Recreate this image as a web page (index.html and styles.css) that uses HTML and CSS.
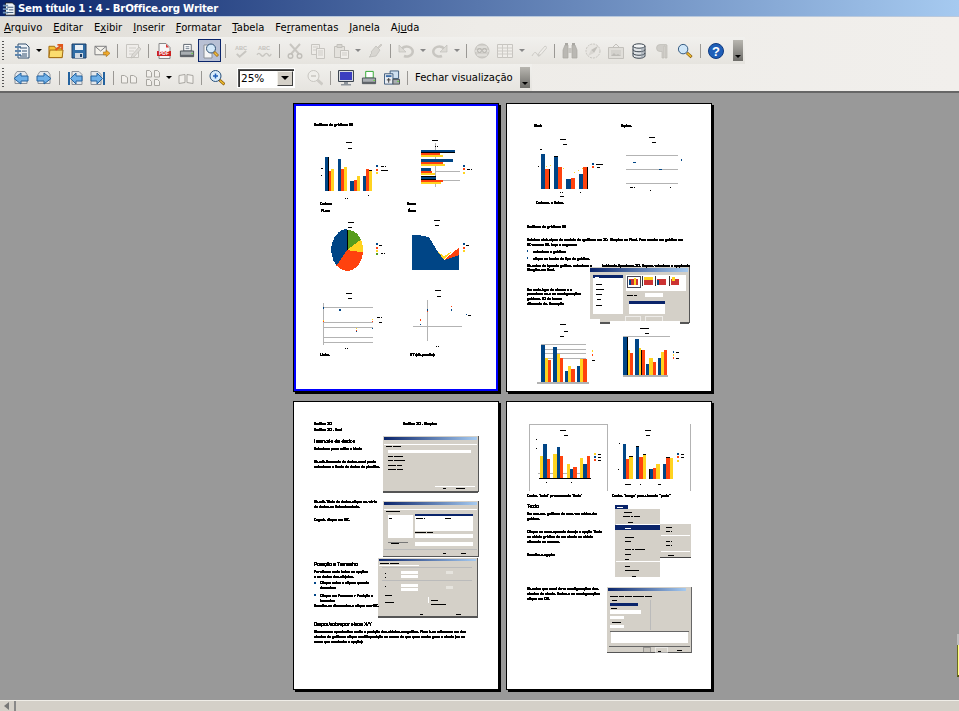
FILE: index.html
```html
<!DOCTYPE html>
<html lang="pt-BR">
<head>
<meta charset="utf-8">
<title>Sem título 1 : 4 - BrOffice.org Writer</title>
<link rel="stylesheet" href="styles.css">
</head>
<body>
<svg class="defs" aria-hidden="true">
<defs>
<linearGradient id="tbar" x1="0" x2="1" y1="0" y2="0"><stop offset="0" stop-color="#0a246a"/><stop offset="1" stop-color="#a6caf0"/></linearGradient>
<symbol id="i-new" viewBox="0 0 16 16"><path d="M4 1h8l3 3v11H4z" fill="#eef3f8" stroke="#34506e"/><path d="M1 3h6v2H1zM1 7h6v2H1zM1 11h6v2H1z" fill="#5f86ad"/><path d="M6 5h7M8 8h5M8 11h5M6 13h7" stroke="#34506e"/></symbol>
<symbol id="i-open" viewBox="0 0 17 16"><path d="M1 3h6l1 2h7v10H1z" fill="#f5c33a" stroke="#a06a10"/><path d="M2 7h14l-1 8H1z" fill="#fbdc6e" stroke="#a06a10"/><path d="M8 7l6-5M10 1.500h5v5" fill="none" stroke="#e0561a" stroke-width="2"/></symbol>
<symbol id="i-save" viewBox="0 0 16 16"><path d="M1 1h14v14H1z" fill="#2f6ca5" stroke="#1d3f68"/><path d="M4 2h8v5H4z" fill="#e8eef4"/><path d="M4 10h8v5H4z" fill="#cfd8e2"/><path d="M9 11h2v3H9z" fill="#1d3f68"/></symbol>
<symbol id="i-mail" viewBox="0 0 17 16"><path d="M1 3h12v9H1z" fill="#f4f2ec" stroke="#77777a"/><path d="M1 3l6 5 6-5" fill="none" stroke="#77777a"/><path d="M10 9h3V7l4 3.500-4 3.500v-2h-3z" fill="#f0a828" stroke="#9d6a14" stroke-width=".6"/></symbol>
<symbol id="i-edit" viewBox="0 0 16 16"><path d="M1.500 1.500h12v13h-12z" fill="#efedea" stroke="#c7c5c0"/><path d="M4 5h7M4 8h5M4 11h4" stroke="#cfcdc8"/><path d="M7 12l7-8 2 2-7 8-3 1z" fill="#dcdad6" stroke="#bdbbb6" stroke-width=".7"/></symbol>
<symbol id="i-pdf" viewBox="0 0 16 16"><path d="M3 .500h7l4 4v11H3z" fill="#f6f6f6" stroke="#888"/><path d="M10 1l3 3.500h-3z" fill="#d33"/><path d="M1 8h14v5H1z" fill="#c22"/><text x="8" y="12.400" class="pdf">PDF</text></symbol>
<symbol id="i-print" viewBox="0 0 17 16"><path d="M5 1h8v7H5z" fill="#fff" stroke="#57606a"/><path d="M7 3.500h4M7 5.500h4" stroke="#6d7b8a"/><path d="M1.500 8h14v6h-14z" fill="#a9aeb2" stroke="#4c5257"/><path d="M2 12h13v2H2z" fill="#5f6469"/><path d="M13 10h2v1h-2z" fill="#5fd03a"/></symbol>
<symbol id="i-prev" viewBox="0 0 18 18"><path d="M3 3h8v13H3z" fill="#f5f5f5" stroke="#8a8f96"/><circle cx="10" cy="6.500" r="4.500" fill="#d3e8f8" stroke="#2f4f72"/><path d="M13 10l4 4" stroke="#a06a10" stroke-width="3"/><path d="M13.500 10.500l3 3" stroke="#f0c040" stroke-width="1.500"/></symbol>
<symbol id="i-abc" viewBox="0 0 17 16"><text x="8.500" y="7" class="abc">ABC</text><path d="M4 11l3 3 7-6" fill="none" stroke="#c8c6c1" stroke-width="2"/></symbol>
<symbol id="i-abcw" viewBox="0 0 17 16"><text x="8.500" y="7" class="abc">ABC</text><path d="M1 12q2-3 4 0t4 0 4 0 3-1" fill="none" stroke="#c8c6c1" stroke-width="1.500"/></symbol>
<symbol id="i-cut" viewBox="0 0 16 16"><path d="M3 1l9 10M13 1L4 11" stroke="#c8c6c1" stroke-width="2"/><circle cx="3.500" cy="13" r="2.300" fill="none" stroke="#c0beb9" stroke-width="1.400"/><circle cx="12.500" cy="13" r="2.300" fill="none" stroke="#c0beb9" stroke-width="1.400"/></symbol>
<symbol id="i-copy" viewBox="0 0 16 16"><path d="M1.500 1.500h8v10h-8z" fill="#eeece8" stroke="#c7c5c0"/><path d="M6.500 5.500h8v10h-8z" fill="#eeece8" stroke="#c7c5c0"/><path d="M3 4h5M3 7h3M8 8h5M8 10h5M8 12h5" stroke="#cfcdc8"/></symbol>
<symbol id="i-paste" viewBox="0 0 16 16"><path d="M1.500 3.500h10v11h-10z" fill="#e4e2dd" stroke="#c2c0bb"/><path d="M4 1.500h5v3H4z" fill="#d8d6d1" stroke="#c2c0bb"/><path d="M7.500 7.500h8v8h-8z" fill="#f0eeea" stroke="#c2c0bb"/><path d="M9 10h5M9 12h5" stroke="#cfcdc8"/></symbol>
<symbol id="i-brush" viewBox="0 0 16 16"><path d="M10 5l4-4 1 1-4 4z" fill="#cfcdc8" stroke="#c2c0bb" stroke-width=".6"/><path d="M9 3l4 4-4 6-7 1 2-1-1-1 2-2-1-1z" fill="#d8d6d1" stroke="#c2c0bb" stroke-width=".8"/></symbol>
<symbol id="i-undo" viewBox="0 0 16 16"><path d="M3 7a6 5 0 1 1 3 6" fill="none" stroke="#c8c6c1" stroke-width="2.500"/><path d="M1 2v7h7z" fill="#dcdad5" stroke="#c2c0bb" stroke-width=".7"/></symbol>
<symbol id="i-redo" viewBox="0 0 16 16"><path d="M13 7a6 5 0 1 0-3 6" fill="none" stroke="#c8c6c1" stroke-width="2.500"/><path d="M15 2v7H8z" fill="#dcdad5" stroke="#c2c0bb" stroke-width=".7"/></symbol>
<symbol id="i-globe" viewBox="0 0 16 16"><circle cx="8" cy="8" r="7" fill="#d2d0cb" stroke="#c4c2bd"/><path d="M1 8h14M3 4h10M3 12h10" stroke="#ecebe7"/><circle cx="5.500" cy="7.500" r="2" fill="none" stroke="#b5b3ae"/><circle cx="10.500" cy="7.500" r="2" fill="none" stroke="#b5b3ae"/></symbol>
<symbol id="i-table" viewBox="0 0 16 16"><path d="M.500 1.500h15v13H.500z" fill="#f0eeea" stroke="#c7c5c0"/><path d="M.5 5h15M.5 8h15M.5 11h15M5.500 1.500v13M10.500 1.500v13" stroke="#cdcbc6"/></symbol>
<symbol id="i-draw" viewBox="0 0 16 16"><path d="M1 13q3-6 5-2t3 1" fill="none" stroke="#cdcbc6"/><path d="M8 10l6-7 2 1.500-6 7-3 1z" fill="#eeece8" stroke="#c7c5c0" stroke-width=".8"/></symbol>
<symbol id="i-bin" viewBox="0 0 16 16"><path d="M1 7l2-5h3v13H1zM15 7l-2-5h-3v13h5z" fill="#bab8b3" stroke="#a9a7a2" stroke-width=".7"/><path d="M6 5h4v5H6z" fill="#c8c6c1"/><path d="M3 0h3v2H3zM10 0h3v2h-3z" fill="#a9a7a2"/></symbol>
<symbol id="i-nav" viewBox="0 0 16 16"><circle cx="8" cy="8" r="7" fill="#e8e6e2" stroke="#c8c6c1" stroke-dasharray="2 1"/><path d="M13 3L9 10 6 7z" fill="#c2c0bb"/><path d="M3 13l3-6 3 3z" fill="#d8d6d1"/></symbol>
<symbol id="i-gal" viewBox="0 0 16 16"><path d="M.5 4.500h15v11H.5z" fill="#e0ded9" stroke="#c2c0bb"/><path d="M3 7h10v6H3z" fill="#d4d2cd"/><path d="M5 4l3-3 3 3" fill="none" stroke="#c2c0bb"/><path d="M3 13l3-3 2 2 2-1 3 2z" fill="#bdbbb6"/></symbol>
<symbol id="i-db" viewBox="0 0 14 16"><path d="M1 3v10c0 3 12 3 12 0V3z" fill="#dfe3e6" stroke="#3d4650"/><ellipse cx="7" cy="3" rx="6" ry="2.200" fill="#f3f5f6" stroke="#3d4650"/><path d="M1 6.500c0 3 12 3 12 0M1 10c0 3 12 3 12 0" fill="none" stroke="#3d4650"/><path d="M9 4v11h3V4z" fill="#8a949e" opacity=".5"/></symbol>
<symbol id="i-para" viewBox="0 0 14 16"><path d="M11 1.500H5a3.500 3.500 0 0 0 0 7h2v6.500h2V3h1v12h2V2z" fill="#cfcdc8" stroke="#bdbbb6" stroke-width=".7"/></symbol>
<symbol id="i-find" viewBox="0 0 17 16"><circle cx="6.500" cy="6" r="5" fill="#cfe6f8" stroke="#28507a"/><path d="M10.500 10l5 4.500" stroke="#8a5c10" stroke-width="3"/><path d="M11 10.500l4 3.500" stroke="#f2c22e" stroke-width="1.500"/></symbol>
<symbol id="i-help" viewBox="0 0 16 16"><circle cx="8" cy="8" r="7.500" fill="#1f5fb8" stroke="#0f3a80"/><text x="8" y="12.800" class="helpq">?</text></symbol>
<symbol id="i-back" viewBox="0 0 16 16"><path d="M4 1.500h8l2 3v9H2v-9z" fill="#e4e8ec" stroke="#8b9199"/><path d="M8 3v3h7v5H8v3L1 8.500z" fill="#6fb0e8" stroke="#24639f"/></symbol>
<symbol id="i-fwd" viewBox="0 0 16 16"><path d="M4 1.500h8l2 3v9H2v-9z" fill="#e4e8ec" stroke="#8b9199"/><path d="M8 3v3H1v5h7v3l7-5.500z" fill="#6fb0e8" stroke="#24639f"/></symbol>
<symbol id="i-first" viewBox="0 0 16 16"><path d="M5 1.500h7l3 3v10H5z" fill="#e4e8ec" stroke="#8b9199"/><path d="M1 2h2v13H1z" fill="#24639f"/><path d="M9 3v3h6v5H9v3L3.500 8.500z" fill="#6fb0e8" stroke="#24639f"/></symbol>
<symbol id="i-last" viewBox="0 0 16 16"><path d="M1 1.500h7l3 3v10H1z" fill="#e4e8ec" stroke="#8b9199"/><path d="M13 2h2v13h-2z" fill="#24639f"/><path d="M7 3v3H1v5h6v3l5.500-5.500z" fill="#6fb0e8" stroke="#24639f"/></symbol>
<symbol id="i-two" viewBox="0 0 16 16"><path d="M.5 5.500h3l3 2v5.500h-6zM9.500 5.500h3l3 2v5.500h-6z" fill="#f2f0ec" stroke="#a8a6a1"/></symbol>
<symbol id="i-four" viewBox="0 0 16 16"><path d="M2.500 .5h3l2 2v4.500h-5zM10.500 .5h3l2 2v4.500h-5zM2.500 9.500h3l2 2v4h-5zM10.500 9.500h3l2 2v4h-5z" fill="#f2f0ec" stroke="#a8a6a1"/></symbol>
<symbol id="i-book" viewBox="0 0 16 16"><path d="M1 5.500l6-1v8l-6 1zM15 5.500l-6-1v8l6 1z" fill="#f2f0ec" stroke="#a8a6a1"/></symbol>
<symbol id="i-zin" viewBox="0 0 16 16"><circle cx="6.500" cy="6" r="5.500" fill="#d9ecfa" stroke="#28507a"/><path d="M4 6h5M6.500 3.500v5" stroke="#1f5fb8" stroke-width="1.500"/><path d="M10.500 10l5 4.500" stroke="#8a5c10" stroke-width="3"/><path d="M11 10.500l4 3.500" stroke="#f2c22e" stroke-width="1.500"/></symbol>
<symbol id="i-zout" viewBox="0 0 16 16"><circle cx="6.500" cy="6" r="5.500" fill="#efeeea" stroke="#c8c6c1"/><path d="M4 6h5" stroke="#c8c6c1" stroke-width="1.500"/><path d="M10.500 10l5 4.500" stroke="#cdcbc6" stroke-width="3"/></symbol>
<symbol id="i-mon" viewBox="0 0 16 16"><path d="M.5 .5h15v11H.5z" fill="#d8dbe0" stroke="#3d4650"/><path d="M2 2h12v8H2z" fill="#3c3fc0"/><path d="M6 12h4v2H6zM3 14h10v1.500H3z" fill="#8d949b"/></symbol>
<symbol id="i-pr2" viewBox="0 0 17 16"><path d="M5 1h8v7H5z" fill="#fff" stroke="#2da62d"/><path d="M1.500 8h14v6h-14z" fill="#a9aeb2" stroke="#4c5257"/><path d="M2 12h13v2H2z" fill="#5f6469"/><path d="M13 10h2v1h-2z" fill="#5fd03a"/></symbol>
<symbol id="i-pr3" viewBox="0 0 17 16"><path d="M6.500 .5h9v8h-9z" fill="#cfe0f0" stroke="#3d5a7a"/><path d="M.5 3.500h9v11h-9z" fill="#e9edf2" stroke="#3d5a7a"/><path d="M2 5h6v2H2z" fill="#3d6ea8"/><path d="M5 8v5M3 10h4" stroke="#333"/><path d="M9.500 9.500h7v5h-7z" fill="#a9aeb2" stroke="#4c5257"/><path d="M14 11h2v1h-2z" fill="#5fd03a"/></symbol>
</defs>
</svg>

<header class="titlebar">
<svg class="ticon" viewBox="0 0 16 16"><path d="M4 1h8l3 3v11H4z" fill="#eef3f8" stroke="#222"/><path d="M1 3h6v2H1zM1 7h6v2H1zM1 11h6v2H1z" fill="#6f93b8"/><path d="M6 6h7M8 9h5M6 12h7" stroke="#34506e"/></svg>
<span>Sem título 1 : 4 - BrOffice.org Writer</span>
</header>

<div class="chrome">
<nav class="menubar">
<span><u>A</u>rquivo</span><span><u>E</u>ditar</span><span>E<u>x</u>ibir</span><span><u>I</u>nserir</span><span><u>F</u>ormatar</span><span><u>T</u>abela</span><span>Fe<u>r</u>ramentas</span><span><u>J</u>anela</span><span>Aj<u>u</u>da</span>
</nav>

<div class="toolbar tb-main">
<i class="grip"></i>
<b class="btn"><svg class="ic"><use href="#i-new"/></svg></b><b class="arr"></b>
<b class="btn"><svg class="ic"><use href="#i-open"/></svg></b>
<b class="btn"><svg class="ic"><use href="#i-save"/></svg></b>
<b class="btn"><svg class="ic"><use href="#i-mail"/></svg></b>
<i class="sep"></i>
<b class="btn"><svg class="ic"><use href="#i-edit"/></svg></b>
<i class="sep"></i>
<b class="btn"><svg class="ic"><use href="#i-pdf"/></svg></b>
<b class="btn"><svg class="ic"><use href="#i-print"/></svg></b>
<b class="btn on"><svg class="ic big"><use href="#i-prev"/></svg></b>
<i class="sep"></i>
<b class="btn"><svg class="ic"><use href="#i-abc"/></svg></b>
<b class="btn"><svg class="ic"><use href="#i-abcw"/></svg></b>
<i class="sep"></i>
<b class="btn"><svg class="ic"><use href="#i-cut"/></svg></b>
<b class="btn"><svg class="ic"><use href="#i-copy"/></svg></b>
<b class="btn"><svg class="ic"><use href="#i-paste"/></svg></b><b class="arr off"></b>
<b class="btn"><svg class="ic"><use href="#i-brush"/></svg></b>
<i class="sep"></i>
<b class="btn"><svg class="ic"><use href="#i-undo"/></svg></b><b class="arr off"></b>
<b class="btn"><svg class="ic"><use href="#i-redo"/></svg></b><b class="arr off"></b>
<i class="sep"></i>
<b class="btn"><svg class="ic"><use href="#i-globe"/></svg></b>
<b class="btn"><svg class="ic"><use href="#i-table"/></svg></b><b class="arr off"></b>
<b class="btn"><svg class="ic"><use href="#i-draw"/></svg></b>
<i class="sep"></i>
<b class="btn"><svg class="ic"><use href="#i-bin"/></svg></b>
<b class="btn"><svg class="ic"><use href="#i-nav"/></svg></b>
<b class="btn"><svg class="ic"><use href="#i-gal"/></svg></b>
<b class="btn"><svg class="ic"><use href="#i-db"/></svg></b>
<b class="btn"><svg class="ic"><use href="#i-para"/></svg></b>
<b class="btn"><svg class="ic"><use href="#i-find"/></svg></b>
<i class="sep"></i>
<b class="btn"><svg class="ic"><use href="#i-help"/></svg></b>
<b class="more"></b>
</div>

<div class="toolbar tb-preview">
<i class="grip"></i>
<b class="btn"><svg class="ic"><use href="#i-back"/></svg></b>
<b class="btn"><svg class="ic"><use href="#i-fwd"/></svg></b>
<i class="sep"></i>
<b class="btn"><svg class="ic"><use href="#i-first"/></svg></b>
<b class="btn"><svg class="ic"><use href="#i-last"/></svg></b>
<i class="sep"></i>
<b class="btn"><svg class="ic"><use href="#i-two"/></svg></b>
<b class="btn"><svg class="ic"><use href="#i-four"/></svg></b><b class="arr"></b>
<b class="btn"><svg class="ic"><use href="#i-book"/></svg></b>
<i class="sep"></i>
<b class="btn"><svg class="ic"><use href="#i-zin"/></svg></b>
<div class="combo"><span>25%</span><b class="combo-btn"></b></div>
<b class="btn"><svg class="ic"><use href="#i-zout"/></svg></b>
<i class="sep"></i>
<b class="btn"><svg class="ic"><use href="#i-mon"/></svg></b>
<b class="btn"><svg class="ic"><use href="#i-pr2"/></svg></b>
<b class="btn"><svg class="ic"><use href="#i-pr3"/></svg></b>
<i class="sep"></i>
<span class="close-label">Fechar visualização</span>
<b class="more"></b>
</div>
</div>

<main class="canvas">

<section class="page current">
<svg viewBox="294 104 204 287" class="sheet">
<defs><filter id="ink" filterUnits="userSpaceOnUse" x="0" y="0" width="959" height="711" color-interpolation-filters="sRGB"><feComponentTransfer><feFuncA type="discrete" tableValues="0 1 1 1 1 1"/></feComponentTransfer></filter></defs>
<g class="o"><rect x="325" y="157" width="3" height="34"/><rect x="328" y="171" width="3" height="20" class="r"/><rect x="331" y="169" width="3" height="22" class="y"/><rect x="338" y="159" width="3" height="32"/><rect x="341" y="169" width="3" height="22" class="r"/><rect x="344" y="167" width="3" height="24" class="y"/><rect x="350" y="181" width="4" height="10"/><rect x="354" y="180" width="3" height="11" class="r"/><rect x="357" y="176" width="3" height="15" class="y"/><rect x="363" y="176" width="3" height="15"/><rect x="366" y="169" width="3" height="22" class="r"/><rect x="369" y="171" width="3" height="20" class="y"/>
<rect x="376" y="165" width="2" height="2"/><rect x="376" y="169" width="2" height="2" class="r"/><rect x="376" y="172" width="2" height="2" class="y"/></g>
<path d="M328.500 157v34M369 170.500h3" class="ln"/>
<g class="grid"><rect x="435" y="143" width="1" height="44"/><rect x="435" y="171" width="25" height="1"/><rect x="443" y="180" width="17" height="1"/></g>
<g class="o"><rect x="421" y="150" width="34" height="3"/><rect x="421" y="153" width="19" height="2" class="r"/><rect x="421" y="155" width="22" height="2" class="y"/><rect x="421" y="159" width="32" height="3"/><rect x="421" y="162" width="22" height="2" class="r"/><rect x="421" y="164" width="24" height="2" class="y"/><rect x="421" y="168" width="10" height="3"/><rect x="421" y="171" width="11" height="2" class="r"/><rect x="421" y="173" width="14" height="2" class="y"/><rect x="421" y="177" width="15" height="3"/><rect x="421" y="180" width="22" height="2" class="r"/><rect x="421" y="182" width="20" height="2" class="y"/>
<rect x="463" y="165" width="2" height="2"/><rect x="463" y="168" width="2" height="2" class="r"/><rect x="463" y="172" width="2" height="2" class="y"/></g>
<path d="M421 152.500h34M421 176.500h15M421 179.500h15" class="ln"/>
<g class="pie"><path d="M347 250L347 230A16 21 0 0 1 361 239.500Z" fill="#579d1c"/><path d="M347 250L361 239.500A16 21 0 0 1 363 252.500Z" fill="#ffd320"/><path d="M347 250L363 252.500A16 21 0 0 1 336.500 265.500Z" fill="#ff420e"/><path d="M347 250L336.500 265.500A16 21 0 0 1 347 229Z" fill="#004586"/></g>
<path d="M347 230v20" class="ln"/>
<g class="o"><rect x="376" y="243" width="2" height="2"/><rect x="376" y="247" width="2" height="2" class="r"/><rect x="376" y="250" width="2" height="2" class="y"/><rect x="376" y="253" width="2" height="2" class="g"/></g>
<path d="M412 235h6l11 2 9 15 6 8 15-5v15h-47z" fill="#004586"/><path d="M444 260l12-10 3-2v7z" fill="#ff420e"/><path d="M438 252l6 4 7-4-7 8z" fill="#ffd320"/>
<g class="o"><rect x="463" y="243" width="2" height="2"/><rect x="463" y="247" width="2" height="2" class="r"/><rect x="463" y="250" width="2" height="2" class="y"/></g>
<g class="grid"><rect x="323" y="307" width="50" height="1"/><rect x="323" y="322" width="50" height="1"/><rect x="323" y="327" width="50" height="1"/><rect x="323" y="337" width="50" height="1"/><rect x="323" y="342" width="50" height="1"/><rect x="323" y="303" width="1" height="42"/><rect x="427" y="300" width="1" height="41"/><rect x="413" y="326" width="49" height="1"/></g>
<g class="o"><rect x="339" y="309" width="2" height="2"/><rect x="323" y="307" width="1" height="2"/><rect x="323" y="320" width="1" height="1" class="y"/><rect x="323" y="321" width="1" height="1" class="r"/><rect x="356" y="328" width="1" height="1" class="y"/><rect x="356" y="330" width="1" height="1" class="r"/><rect x="356" y="331" width="1" height="1"/><rect x="372" y="319" width="1" height="1" class="y"/><rect x="372" y="321" width="1" height="1" class="r"/><rect x="372" y="328" width="1" height="1"/>
<rect x="427" y="309" width="1" height="2"/><rect x="427" y="311" width="1" height="1" class="r"/><rect x="451" y="306" width="1" height="1" class="r"/><rect x="451" y="309" width="1" height="2"/><rect x="420" y="319" width="1" height="2" class="r"/><rect x="420" y="324" width="1" height="1"/><rect x="466" y="314" width="1" height="1"/></g>
<g filter="url(#ink)">
<text x="314" y="126" class="t">Gráficos de gráficos 2D</text>
<text x="320" y="205" class="t">Coluna</text><text x="407" y="205" class="t">Barra</text><text x="321" y="212" class="t">Pizza</text><text x="408" y="212" class="t">Área</text><text x="320" y="356" class="t">Linha</text><text x="410" y="356" class="t">XY (dispersão)</text>
<text x="346" y="143" class="s">Título</text><text x="348" y="149" class="s">Sub</text><text x="432" y="141" class="s">Título</text><text x="435" y="147" class="s">1 1</text>
<text x="381" y="167" class="s">Lin 1</text><text x="381" y="171" class="s">Coluna</text><text x="467" y="170" class="s">Col 2</text>
<text x="348" y="223" class="s">Título</text><text x="348" y="228" class="s">Sub</text><text x="434" y="221" class="s">Título</text><text x="435" y="226" class="s">Sub</text>
<text x="346" y="294" class="s">Título</text><text x="348" y="299" class="s">Sub</text><text x="435" y="291" class="s">Título</text><text x="437" y="297" class="s">Sub</text>
<text x="321" y="169" class="s">10</text><text x="321" y="176" class="s">8</text><text x="345" y="199" class="s">1 2</text><text x="368" y="196" class="s">4</text><text x="379" y="246" class="s">C 1</text><text x="381" y="254" class="s">C 4</text><text x="466" y="246" class="s">Col</text><text x="377" y="318" class="s">Col 1</text><text x="379" y="323" class="s">Co</text><text x="345" y="349" class="s">1 2</text><text x="468" y="316" class="s">Col</text><text x="436" y="347" class="s">1 1</text>
</g>
</svg>
</section>

<section class="page">
<svg viewBox="507 104 204 287" class="sheet">
<g class="o"><rect x="541" y="154" width="4" height="35"/><rect x="545" y="169" width="5" height="20" class="r"/><rect x="554" y="156" width="4" height="33"/><rect x="558" y="167" width="4" height="22" class="r"/><rect x="566" y="179" width="5" height="10"/><rect x="571" y="178" width="4" height="11" class="r"/><rect x="579" y="174" width="4" height="15"/><rect x="583" y="167" width="4" height="22" class="r"/><rect x="592" y="163" width="2" height="2"/><rect x="592" y="166" width="2" height="2" class="r"/></g>
<path d="M549.500 169v20M554 156.500h4M587 167v22" class="ln"/>
<g class="y2"><rect x="546" y="166" width="1" height="1"/><rect x="550" y="165" width="1" height="1"/><rect x="563" y="168" width="1" height="1"/><rect x="574" y="172" width="1" height="1"/><rect x="578" y="170" width="1" height="1"/><rect x="582" y="168" width="1" height="1"/></g>
<g class="grid"><rect x="626" y="155" width="52" height="1"/><rect x="626" y="169" width="52" height="1"/><rect x="626" y="183" width="52" height="1"/></g>
<g class="o"><rect x="633" y="162" width="3" height="1"/><rect x="659" y="169" width="3" height="1"/><rect x="681" y="159" width="1" height="2"/>
<rect x="527" y="250" width="1" height="2"/><rect x="527" y="257" width="1" height="2"/></g>
<g class="dlg"><rect x="590" y="267" width="99" height="55" fill="#d4d0c8"/><rect x="590" y="322" width="99" height="1.500" fill="#555"/><rect x="689" y="267" width="1" height="56" fill="#555"/><rect x="590" y="268" width="98" height="4" fill="url(#tbar)"/><rect x="593" y="275" width="30" height="39" fill="#fff"/><rect x="593" y="275" width="30" height="3" fill="#0a246a"/>
<rect x="626" y="275" width="60" height="16" fill="#fff"/><rect x="627" y="276" width="13" height="11" fill="#fff" stroke="#445"/><rect x="629" y="279" width="9" height="6" fill="#c33"/><rect x="629" y="280" width="2" height="5" fill="#004586"/><rect x="634" y="278" width="2" height="7" fill="#ffd320"/><rect x="644" y="279" width="9" height="6" fill="#c33"/><rect x="644" y="277" width="9" height="3" fill="#ffd320"/><rect x="657" y="279" width="9" height="6" fill="#c33"/><rect x="657" y="280" width="2" height="5" fill="#004586"/><rect x="671" y="279" width="8" height="6" fill="#c33"/><rect x="672" y="277" width="3" height="4" fill="#ffd320"/><rect x="642" y="276" width="1" height="10" fill="#333"/><rect x="669" y="276" width="1" height="10" fill="#333"/><rect x="655" y="276" width="1" height="10" fill="#333"/>
<rect x="645" y="293" width="18" height="4" fill="#fff"/><rect x="629" y="301" width="36" height="13" fill="#fff"/><rect x="629" y="301" width="36" height="3" fill="#0a246a"/><rect x="589" y="319" width="11" height="5" fill="#fff"/><rect x="610" y="321" width="70" height="3" fill="#fff"/><rect x="625" y="316" width="15" height="5" fill="#d4d0c8" stroke="#fff" stroke-width=".6"/><rect x="645" y="316" width="17" height="5" fill="#d4d0c8" stroke="#fff" stroke-width=".6"/></g>
<g class="grid"><rect x="541" y="344" width="45" height="1"/><rect x="541" y="349" width="45" height="1"/><rect x="541" y="353" width="45" height="1"/><rect x="541" y="358" width="45" height="1"/><rect x="537" y="382" width="52" height="2"/><rect x="623" y="336" width="47" height="1"/><rect x="623" y="375" width="45" height="2"/></g>
<g class="o"><rect x="541" y="345" width="4" height="37"/><rect x="545" y="358" width="3" height="24" class="y"/><rect x="548" y="360" width="3" height="22" class="r"/><rect x="553" y="347" width="4" height="35"/><rect x="557" y="354" width="3" height="28" class="y"/><rect x="560" y="358" width="3" height="24" class="r"/><rect x="565" y="371" width="3" height="11"/><rect x="568" y="366" width="3" height="16" class="y"/><rect x="571" y="369" width="4" height="13" class="r"/><rect x="577" y="366" width="3" height="16"/><rect x="580" y="359" width="3" height="23" class="y"/><rect x="583" y="359" width="4" height="23" class="r"/>
<rect x="623" y="337" width="4" height="38"/><rect x="627" y="350" width="3" height="25" class="y"/><rect x="630" y="353" width="3" height="22" class="r"/><rect x="635" y="339" width="4" height="36"/><rect x="639" y="348" width="2" height="27" class="y"/><rect x="641" y="350" width="4" height="25" class="r"/><rect x="646" y="364" width="3" height="11"/><rect x="649" y="358" width="4" height="17" class="y"/><rect x="653" y="362" width="3" height="13" class="r"/><rect x="658" y="358" width="3" height="17"/><rect x="661" y="352" width="3" height="23" class="y"/><rect x="664" y="350" width="3" height="25" class="r"/>
<rect x="592" y="350" width="1" height="2" class="y"/><rect x="592" y="354" width="1" height="2" class="r"/><rect x="673" y="351" width="1" height="2"/><rect x="673" y="354" width="1" height="2" class="y"/><rect x="673" y="357" width="1" height="2" class="r"/></g>
<path d="M627 337v38M641 350v25" class="ln"/>
<g filter="url(#ink)">
<text x="534" y="127" class="t">Rede</text><text x="621" y="127" class="t">Ações</text><text x="536" y="204" class="t">Colunas e linhas</text><text x="527" y="228" class="t">Gráficos de gráficos 3D</text>
<text x="527" y="241" class="t">Existem dois tipos de modelo de gráficos em 3D: Simples ou Real. Para mudar um gráfico em</text><text x="527" y="246" class="t">2D em um 3D, faça o seguinte:</text>
<text x="533" y="253" class="t">selecione o gráfico;</text><text x="533" y="260" class="t">clique no botão de tipo de gráfico.</text>
<text x="527" y="267" class="t">Na caixa de tipo de gráfico, selecione a</text><text x="602" y="267" class="t">botão de Aparência 3D. Depois selecione a opção de</text><text x="527" y="271" class="t">Simples ou Real.</text>
<text x="527" y="291" class="t">Em cada tipo de chama e a</text><text x="527" y="295" class="t">pressione as e as configurações</text><text x="527" y="300" class="t">gráficas 3D do forma</text><text x="527" y="305" class="t">diferente do. Exemplo:</text>
<text x="560" y="140" class="s">Título</text><text x="563" y="145" class="s">Sub</text><text x="649" y="138" class="s">Título</text><text x="652" y="143" class="s">Sub</text><text x="596" y="165" class="s">Coluna</text><text x="597" y="168" class="s">Col</text><text x="540" y="150" class="s">10</text><text x="538" y="167" class="s">8</text><text x="560" y="193" class="s">1 2</text><text x="560" y="197" class="s">Sub</text><text x="580" y="193" class="s">4</text><text x="630" y="188" class="s">Col 1</text><text x="650" y="191" class="s">2</text><text x="670" y="188" class="s">3</text>
<text x="560" y="325" class="s">Título</text><text x="564" y="332" class="s">Sub</text><text x="560" y="337" class="s">Eixo</text><text x="640" y="329" class="s">Principal</text><text x="645" y="334" class="s">Sub</text><text x="592" y="361" class="s">Col</text><text x="676" y="353" class="s">Col</text><text x="676" y="359" class="s">Col</text>
<text x="595" y="277.500" class="s wht">Tipo</text><text x="596" y="285" class="s">Linhas</text><text x="596" y="290" class="s">Colunas</text><text x="596" y="295" class="s">Pizza</text><text x="596" y="300" class="s">Área</text><text x="596" y="306" class="s">Dados</text><text x="627" y="296" class="s">Forma 3D</text>
</g>
</svg>
</section>

<section class="page">
<svg viewBox="294 402 204 287" class="sheet">
<g class="dlg"><rect x="383" y="436" width="95" height="55" fill="#d4d0c8"/><rect x="383" y="491" width="95" height="1.500" fill="#555"/><rect x="478" y="436" width="1" height="56" fill="#555"/><rect x="384" y="437" width="93" height="3" fill="url(#tbar)"/><rect x="384" y="444" width="93" height="1" fill="#fff"/><rect x="388" y="450" width="83" height="3" fill="#fff"/><rect x="435" y="486" width="40" height="1" fill="#fff"/>
<rect x="383" y="501" width="95" height="55" fill="#d4d0c8"/><rect x="383" y="556" width="95" height="1" fill="#555"/><rect x="478" y="501" width="1" height="56" fill="#555"/><rect x="384" y="502" width="93" height="3" fill="url(#tbar)"/><rect x="384" y="509" width="93" height="1" fill="#fff"/><rect x="388" y="515" width="25" height="23" fill="#fff"/><rect x="415" y="514" width="58" height="17" fill="#fff"/><rect x="415" y="514" width="58" height="2" fill="#0a246a"/><rect x="415" y="534" width="58" height="4" fill="#fff"/><rect x="415" y="542" width="58" height="4" fill="#fff"/><rect x="388" y="542" width="20" height="1" fill="#777"/><rect x="384" y="549" width="93" height="1" fill="#bbb"/>
<rect x="378" y="558" width="99" height="59" fill="#d4d0c8"/><rect x="378" y="616" width="99" height="1.500" fill="#555"/><rect x="477" y="558" width="1" height="60" fill="#555"/><rect x="379" y="559" width="97" height="2" fill="url(#tbar)"/><rect x="379" y="565" width="40" height="1" fill="#fff"/><rect x="401" y="571" width="17" height="3" fill="#fff"/><rect x="401" y="575" width="17" height="3" fill="#fff"/><rect x="401" y="584" width="17" height="3" fill="#fff"/><rect x="401" y="588" width="17" height="3" fill="#fff"/><rect x="382" y="567" width="90" height="1" fill="#bbb"/><rect x="382" y="580" width="90" height="1" fill="#bbb"/><rect x="446" y="571" width="7" height="3" fill="#e6e4de"/><rect x="446" y="586" width="7" height="3" fill="#e6e4de"/><rect x="428" y="597" width="1" height="6" fill="#fff"/></g>
<g class="o"><rect x="314" y="582" width="2" height="2"/><rect x="314" y="594" width="2" height="2"/></g>
<g filter="url(#ink)">
<text x="314" y="425" class="t">Gráfico 3D</text><text x="403" y="425" class="t">Gráfico 3D - Simples</text><text x="314" y="431" class="t">Gráfico 3D - Real</text>
<text x="314" y="443" class="h">Intervalo de dados</text>
<text x="314" y="450" class="t">Selecione para editar o título</text>
<text x="314" y="463" class="t">Na tela Intervalo de dados você pode</text><text x="314" y="468" class="t">selecionar a fonte de dados da planilha.</text>
<text x="314" y="503" class="t">Na tela Série de dados clique na série</text><text x="314" y="508" class="t">de dados ao lado da tabela.</text><text x="314" y="521" class="t">Depois clique em OK.</text>
<text x="314" y="566" class="h">Posição e Tamanho</text>
<text x="314" y="573" class="t">Para listar mais todas as opções</text><text x="314" y="578" class="t">e os dados dos objetos.</text>
<text x="320" y="584" class="t">Clique sobre o objeto quando</text><text x="320" y="589" class="t">desenhar.</text><text x="320" y="597" class="t">Clique em Formatar &gt; Posição e</text><text x="320" y="602" class="t">tamanho.</text><text x="314" y="607" class="t">Escolha as dimensões e clique em OK.</text>
<text x="314" y="626" class="h">Dispor/sobrepor eixos X/Y</text>
<text x="314" y="633" class="t">Um recurso que facilita muito a posição dos rótulos no gráfico. Para isso selecione um dos</text><text x="314" y="638" class="t">rótulos de gráfico e clique em Disposição no menu do que quer mudar para o rótulo (ou no</text><text x="314" y="643" class="t">menu que contenha a opção).</text>
<text x="386" y="447" class="s">Dados Intervalo</text><text x="388" y="457" class="s">Série em linhas</text><text x="388" y="461" class="s">Série em colunas</text><text x="388" y="466" class="s">Primeira linha</text><text x="388" y="470" class="s">Primeira coluna</text><text x="443" y="489" class="s">OK</text><text x="456" y="489" class="s">Cancelar</text>
<text x="386" y="512" class="s">Intervalo Série</text><text x="416" y="519" class="s">Coluna 1</text><text x="445" y="519" class="s">Dados</text><text x="415" y="533" class="s">Intervalo de dados</text><text x="389" y="519" class="s">Col</text><text x="390" y="544" class="s">Adicionar</text><text x="443" y="554" class="s">OK</text><text x="460" y="554" class="s">Ajuda</text>
<text x="380" y="564" class="s">Posição e tamanho</text><text x="385" y="574" class="s">X</text><text x="385" y="578" class="s">Y</text><text x="385" y="587" class="s">L</text><text x="385" y="591" class="s">A</text><text x="385" y="596" class="s">Manter</text><text x="385" y="603" class="s">Proteger</text><text x="430" y="601" class="s">Adaptar</text><text x="430" y="605" class="s">Adaptar ao texto</text><text x="420" y="615" class="s">OK</text><text x="455" y="615" class="s">Ajuda</text>
</g>
</svg>
</section>

<section class="page">
<svg viewBox="507 402 204 287" class="sheet">
<g class="grid"><rect x="529" y="424" width="78" height="1"/><rect x="529" y="424" width="1" height="67"/><rect x="607" y="424" width="1" height="67"/><rect x="690" y="424" width="1" height="67"/><rect x="538" y="473" width="52" height="1"/></g>
<g class="o"><rect x="540" y="456" width="3" height="22" class="y"/><rect x="543" y="444" width="4" height="34"/><rect x="547" y="459" width="3" height="19" class="r"/><rect x="553" y="454" width="4" height="24" class="y"/><rect x="557" y="447" width="3" height="31"/><rect x="560" y="456" width="3" height="22" class="r"/><rect x="567" y="464" width="3" height="14" class="y"/><rect x="570" y="469" width="3" height="9"/><rect x="573" y="467" width="4" height="11" class="r"/><rect x="580" y="458" width="3" height="20" class="y"/><rect x="583" y="464" width="4" height="14"/><rect x="587" y="456" width="3" height="22" class="r"/>
<rect x="623" y="444" width="3" height="35"/><rect x="626" y="459" width="3" height="20" class="r"/><rect x="629" y="456" width="4" height="23" class="y"/><rect x="636" y="446" width="3" height="33"/><rect x="639" y="457" width="4" height="22" class="r"/><rect x="643" y="454" width="3" height="25" class="y"/><rect x="649" y="469" width="4" height="10"/><rect x="653" y="468" width="3" height="11" class="r"/><rect x="656" y="464" width="4" height="15" class="y"/><rect x="663" y="464" width="3" height="15"/><rect x="666" y="457" width="4" height="22" class="r"/><rect x="670" y="458" width="3" height="21" class="y"/>
<rect x="594" y="453" width="2" height="2" class="y"/><rect x="594" y="456" width="2" height="2"/><rect x="594" y="459" width="2" height="2" class="r"/><rect x="677" y="453" width="2" height="2"/><rect x="677" y="456" width="2" height="2" class="r"/><rect x="677" y="460" width="2" height="2" class="y"/></g>
<rect x="539" y="478" width="52" height="1" fill="#000"/><path d="M649 469v10" class="ln"/><path d="M636 446.500h3M629 456.500h4M643 454.500h3M666 457.500h4" class="ln"/>
<g class="dlg"><rect x="615" y="505" width="13" height="4" fill="#0a246a"/><rect x="615" y="509" width="45" height="68" fill="#d4d0c8"/><rect x="616" y="524" width="44" height="1" fill="#fff"/><rect x="615" y="525" width="45" height="5" fill="#0a246a"/><rect x="616" y="561" width="44" height="1" fill="#fff"/>
<rect x="660" y="524" width="31" height="34" fill="#d4d0c8"/><rect x="660" y="557" width="31" height="1" fill="#444"/><rect x="661" y="535" width="29" height="1" fill="#fff"/><rect x="661" y="551" width="29" height="1" fill="#fff"/>
<rect x="607" y="587" width="85" height="66" fill="#d4d0c8"/><rect x="607" y="652" width="85" height="1" fill="#555"/><rect x="691" y="587" width="1" height="66" fill="#666"/><rect x="608" y="588" width="78" height="3" fill="url(#tbar)"/><rect x="610" y="603" width="28" height="3" fill="#0a246a"/><rect x="610" y="610" width="31" height="4" fill="#fff"/><rect x="610" y="616" width="14" height="3" fill="#fff"/><rect x="610" y="625" width="14" height="3" fill="#fff"/><rect x="650" y="600" width="1" height="30" fill="#bbb"/><rect x="611" y="632" width="77" height="11" fill="#fff"/><rect x="610" y="631" width="79" height="1" fill="#666"/><rect x="609" y="646" width="81" height="1" fill="#666"/><rect x="643" y="647" width="7" height="5" fill="#c8c4bc" stroke="#666" stroke-width=".5"/><rect x="655" y="647" width="12" height="5" fill="#d4d0c8" stroke="#fff" stroke-width=".5"/></g>
<g filter="url(#ink)">
<text x="527" y="497" class="t">Dados "lado" pressionado "lado"</text><text x="612" y="497" class="t">Dados "longe" pressionado "perto"</text>
<text x="527" y="508" class="h">Texto</text>
<text x="527" y="515" class="t">Em nossos gráficos de uma vez vários do</text><text x="527" y="520" class="t">gráfico.</text>
<text x="527" y="533" class="t">Clique na caixa quando deseja a opção Texto</text><text x="527" y="538" class="t">no rótulo gráfico de um rótulo no rótulo</text><text x="527" y="543" class="t">clicando no mouse.</text>
<text x="527" y="556" class="t">Escolha a opção:</text>
<text x="527" y="590" class="t">Na caixa que você deve configurações dos</text><text x="527" y="595" class="t">rótulos de rótulo. Dados e as configurações</text><text x="527" y="600" class="t">clique em OK.</text>
<text x="560" y="431" class="s">Título</text><text x="564" y="436" class="s">Sub</text><text x="645" y="431" class="s">Título</text><text x="646" y="436" class="s">Sub</text><text x="536" y="440" class="s">8</text><text x="536" y="449" class="s">6</text><text x="598" y="455" class="s">Col</text><text x="598" y="458" class="s">Col</text><text x="598" y="461" class="s">Col</text><text x="619" y="444" class="s">8</text><text x="618" y="470" class="s">2</text><text x="681" y="455" class="s">Col</text><text x="681" y="458" class="s">Col</text><text x="546" y="483" class="s">1</text><text x="571" y="483" class="s">3</text><text x="625" y="485" class="s">Linha</text><text x="640" y="485" class="s">2</text><text x="658" y="485" class="s">Lin</text>
<text x="623" y="513" class="s">Anotação</text><text x="623" y="517" class="s">Rótulos de dados</text><text x="628" y="523" class="s">Eixos</text><text x="625" y="538" class="s">Legenda</text><text x="625" y="542" class="s">Grade</text><text x="625" y="550" class="s">Linhas de tendência</text><text x="625" y="555" class="s">Média</text><text x="625" y="560" class="s">Sair</text><text x="625" y="567" class="s">Fonte</text><text x="625" y="571" class="s">Formatar texto</text><text x="632" y="577" class="s">Item</text>
<text x="666" y="528" class="s">Título</text><text x="666" y="532" class="s">Eixo Y</text><text x="666" y="542" class="s">Eixo X</text><text x="666" y="546" class="s">Eixo Z</text><text x="668" y="556" class="s">Rótulo</text>
<text x="610" y="597" class="s">Formato Fonte Efeitos Alinhamento Rótulos</text><text x="612" y="601" class="s">Fonte</text><text x="611" y="609" class="s">Estilo</text><text x="612" y="623" class="s">Tamanho</text><text x="658" y="652" class="s">OK</text><text x="676" y="651" class="s">Ajuda</text>
</g>
<g filter="url(#ink)"><text x="617" y="508" class="s wht">Inserir</text><text x="625" y="529" class="s wht">Título</text></g>
</svg>
</section>

</main>

<div class="note"><b class="note-top"></b><span class="note-body"></span></div>

<footer class="hscroll"><b class="hs-btn"><span class="hs-arrow"></span></b></footer>
</body>
</html>
```

FILE: styles.css
```css
* { box-sizing: border-box; }
html, body { margin: 0; padding: 0; }
body {
  width: 959px; height: 711px; overflow: hidden;
  display: flex; flex-direction: column;
  position: relative;
  font-family: "DejaVu Sans", sans-serif;
  background: #999;
}
.defs { width: 0; height: 0; position: absolute; }
.titlebar {
  height: 17px; flex: none;
  display: flex; align-items: center; gap: 2px; padding-left: 2px;
  background: linear-gradient(90deg, #0a246a 0%, #a6caf0 100%);
  color: #fff; font: bold 10.2px "DejaVu Sans", sans-serif;
  letter-spacing: -.25px;
  box-shadow: inset 0 -1px 0 #b9c9dd;
}
.ticon { width: 14px; height: 14px; flex: none; }
.chrome {
  flex: none; height: 76px;
  background: linear-gradient(90deg, #e0ddd7 0%, #eeecE8 50%, #f1efec 100%);
  border-bottom: 2px solid #666;
}
.menubar {
  height: 20px; display: flex; align-items: center; gap: 11px; padding-left: 4px;
  font-size: 10px; color: #000;
}
.toolbar {
  height: 27px; display: flex; align-items: center;
  background: linear-gradient(180deg, #f1f0ed 0%, #e6e4df 100%);
}
.tb-main { width: 745px; }
.tb-preview { width: 532px; }
.grip {
  width: 2px; height: 20px; margin: 0 6px 0 2px; flex: none;
  background: repeating-linear-gradient(180deg, #555 0 1px, transparent 1px 3px);
}
.tb-preview .grip { margin-right: 5px; }
.btn { width: 23px; height: 23px; flex: none; display: flex; align-items: center; justify-content: center; }
.btn.on { background: #b8c0d4; border: 1px solid #0a246a; }
.ic { width: 16px; height: 16px; display: block; }
.ic.big { width: 18px; height: 18px; }
.arr { width: 11px; height: 23px; flex: none; display: flex; align-items: center; justify-content: center; }
.arr::after { content: ""; border: 3px solid transparent; border-top: 3px solid #000; border-bottom: 0; }
.arr.off::after { border-top-color: #888; }
.sep { width: 8px; height: 14px; flex: none; }
.sep::after { content: ""; display: block; width: 1px; height: 14px; margin-left: 3.5px; background: #9a9894; }
.more {
  width: 10px; height: 21px; margin-left: 6px; flex: none;
  background: linear-gradient(180deg, #b8b6b0, #6e6d69);
  display: flex; align-items: flex-end; justify-content: center; padding-bottom: 3px;
}
.more::after { content: ""; border: 3px solid transparent; border-top: 3px solid #000; border-bottom: 0; }
.combo {
  width: 58px; height: 20px; margin: 0 8px 0 9px; flex: none;
  display: flex; background: #fff; border: 1px solid #fff;
  box-shadow: inset 1px 1px 0 #555, inset 2px 2px 0 #333;
  font-size: 10.5px; color: #000;
}
.combo span { flex: 1; padding: 3px 0 0 3px; }
.combo-btn {
  width: 16px; margin: 2px 1px 1px 0; background: #d4d0c8;
  border: 1px solid; border-color: #f4f2ec #404040 #404040 #f4f2ec;
  display: flex; align-items: center; justify-content: center;
}
.combo-btn::after { content: ""; border: 4px solid transparent; border-top: 4px solid #000; border-bottom: 0; }
.close-label { font-size: 10px; color: #000; width: 93px; margin-left: 4px; white-space: nowrap; }
.tb-preview .more { margin-left: 12px; }
.pdf { font: bold 5px "Liberation Sans", sans-serif; fill: #fff; text-anchor: middle; }
.abc { font: bold 6px "Liberation Sans", sans-serif; fill: #c4c2bd; text-anchor: middle; }
.helpq { font: bold 13px "Liberation Sans", sans-serif; fill: #fff; text-anchor: middle; }

.canvas {
  flex: 1; min-height: 0; padding: 10px 0 0 293px;
  display: grid; grid-template-columns: 206px 206px; grid-auto-rows: 289px;
  column-gap: 7px; row-gap: 9px; align-content: start;
  background: #999;
}
.page { background: #fff; border: 1px solid #000; box-shadow: 2px 2px 0 #000; }
.page.current { box-shadow: 2px 2px 0 #000, inset 0 0 0 2px #00f; }
.sheet { display: block; width: 204px; height: 287px; shape-rendering: crispEdges; }
.o rect { fill: #004586; }
.o rect.r { fill: #ff420e; }
.o rect.y { fill: #ffd320; }
.o rect.g { fill: #579d1c; }
.y2 rect { fill: #ffd320; }
.grid rect { fill: #b3b3b3; }
.ln { stroke: #000; stroke-width: 1; fill: none; }
.t { font: bold 3.5px "Liberation Sans", sans-serif; fill: #000; }
.h { font: normal 5px "Liberation Sans", sans-serif; fill: #000; }
.s { font: normal 2.2px "Liberation Sans", sans-serif; fill: #000; }
.wht { fill: #fff; }

.note {
  position: absolute; left: 957px; top: 634px; width: 2px;
  display: flex; flex-direction: column;
}
.note-top { display: block; height: 11px; background: #bdbdbd; }
.note-body { display: block; height: 32px; background: #ffff80; border-left: 1px solid #6a6a20; border-bottom: 2px solid #555510; }
.hscroll {
  height: 11px; flex: none; background: #d4d0c8;
  border-top: 1px solid #f0eee8; display: flex;
}
.hs-btn { width: 16px; height: 10px; display: flex; align-items: center; padding-left: 4px; border-right: 2px solid #888; }
.hs-arrow { border: 4px solid transparent; border-right: 5px solid #777; border-left: 0; }
```
